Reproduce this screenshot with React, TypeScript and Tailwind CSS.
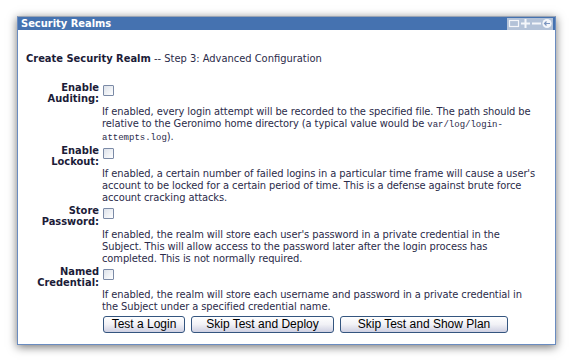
const font = { fontFamily: '"DejaVu Sans Condensed", "DejaVu Sans", sans-serif' };

function Box() {
  return (
    <span className="mt-[3px] ml-[3px] block h-[11px] w-[11px] rounded-[1px] border border-[#7b8aa6] bg-gradient-to-br from-[#dde2ea] to-white" />
  );
}

function Btn({ label, w }: { label: string; w: string }) {
  return (
    <button
      className={`${w} h-[17px] rounded-[3px] border border-[#34557f] bg-gradient-to-b from-white via-[#f1f1f6] to-[#cfd0e2] text-[12px] leading-[15px] text-black`}
      style={{ fontFamily: '"Liberation Sans", Arial, sans-serif' }}
    >
      {label}
    </button>
  );
}

function Section({ l1, l2, children }: { l1: string; l2: string; children: React.ReactNode }) {
  return (
    <>
      <div className="pr-[1px] text-right text-[11px] font-bold leading-[11px] text-[#1c1c38]">
        {l1}
        <br />
        {l2}
      </div>
      <div>
        <Box />
      </div>
      <div />
      <div className="mt-[1.5px] mb-[1px] whitespace-nowrap pl-[2px] text-[11px] leading-[12px] tracking-[-0.08px] text-[#2b2b4a]">
        {children}
      </div>
    </>
  );
}

function Mono({ children }: { children: React.ReactNode }) {
  return (
    <span className="text-[9px] tracking-normal" style={{ fontFamily: '"Liberation Mono", "Courier New", monospace' }}>
      {children}
    </span>
  );
}

export default function App() {
  return (
    <div className="h-[360px] w-[572px] bg-white pt-[16px] pl-[17px]" style={font}>
      <div className="h-[329px] w-[539px] border border-t-[#9aa4b4] border-[#6a8cc0] bg-white shadow-[0_2px_9px_rgba(0,0,0,0.55)]">
        <div className="flex h-[13px] items-center justify-between bg-[#4572b0] pl-[3px]">
          <span className="text-[11px] font-bold leading-[13px] text-white">Security Realms</span>
          <div className="mr-[2px] flex h-[12px] items-center bg-[#b3c2d8] px-[1px]">
            <svg width="44" height="11" viewBox="0 0 44 11">
              <rect x="1.5" y="2.5" width="9" height="6" fill="none" stroke="#f4f6fa" strokeWidth="1.2" />
              <path d="M13 5.5h9M17.5 1v9" stroke="#f4f6fa" strokeWidth="2" />
              <path d="M24 5.5h9" stroke="#f4f6fa" strokeWidth="2" />
              <circle cx="39" cy="5.5" r="4.6" fill="#f4f6fa" />
              <path d="M42 5.5h-5M38.5 3.5l-2 2 2 2" fill="none" stroke="#7d96c0" strokeWidth="1.2" />
            </svg>
          </div>
        </div>

        <div className="mt-[22px] pl-[8px] text-[11px] leading-[14px] text-[#1c1c38]">
          <b>Create Security Realm</b> <span className="text-[#2b2b4a]">-- Step 3: Advanced Configuration</span>
        </div>

        <div className="mt-[16px] grid grid-cols-[82px_1fr]">
          <Section l1="Enable" l2="Auditing:">
            If enabled, every login attempt will be recorded to the specified file. The path should be
            <br />
            relative to the Geronimo home directory (a typical value would be <Mono>var/log/login-</Mono>
            <br />
            <Mono>attempts.log</Mono>).
          </Section>
          <Section l1="Enable" l2="Lockout:">
            If enabled, a certain number of failed logins in a particular time frame will cause a user's
            <br />
            account to be locked for a certain period of time. This is a defense against brute force
            <br />
            account cracking attacks.
          </Section>
          <Section l1="Store" l2="Password:">
            If enabled, the realm will store each user's password in a private credential in the
            <br />
            Subject. This will allow access to the password later after the login process has
            <br />
            completed. This is not normally required.
          </Section>
          <Section l1="Named" l2="Credential:">
            If enabled, the realm will store each username and password in a private credential in
            <br />
            the Subject under a specified credential name.
          </Section>
          <div />
          <div className="mt-[2px] flex gap-[6px] pl-[3px]">
            <Btn label="Test a Login" w="w-[82px]" />
            <Btn label="Skip Test and Deploy" w="w-[143px]" />
            <Btn label="Skip Test and Show Plan" w="w-[168px]" />
          </div>
        </div>
      </div>
    </div>
  );
}
